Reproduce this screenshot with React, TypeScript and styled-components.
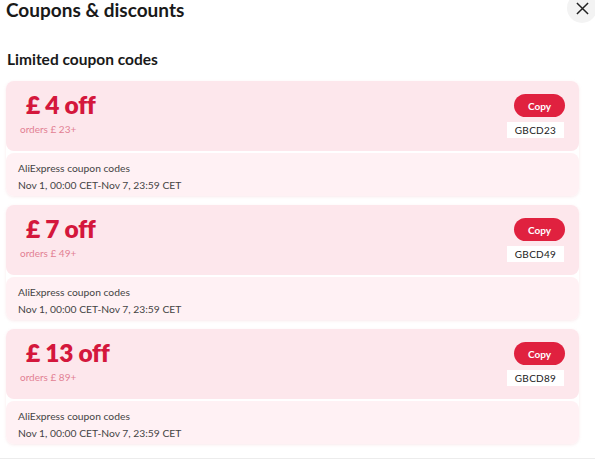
import React from "react";
import styled, { createGlobalStyle } from "styled-components";

const Global = createGlobalStyle`
  body {
    margin: 0;
    background: #fff;
    font-family: Lato, "Open Sans", sans-serif;
    color: #191919;
  }
`;

interface ICoupon {
  amount: number;
  minimum: number;
  code: string;
}

const coupons: ICoupon[] = [
  { amount: 4, minimum: 23, code: "GBCD23" },
  { amount: 7, minimum: 49, code: "GBCD49" },
  { amount: 13, minimum: 89, code: "GBCD89" },
];

const Sheet = styled.div`
  width: 595px;
  height: 459px;
  box-sizing: border-box;
  border-bottom: 1px solid #ececec;
  overflow: hidden;
  padding: 0 16px 0 6px;
`;

const Header = styled.div`
  display: flex;
  justify-content: space-between;
  align-items: flex-start;
  height: 30px;
`;

const Title = styled.h1`
  margin: 0;
  font-size: 19px;
  line-height: 19px;
  font-weight: 700;
  color: #191919;
`;

const Close = styled.button`
  width: 30px;
  height: 30px;
  border: none;
  border-radius: 50%;
  background: #f3f3f3;
  display: flex;
  align-items: center;
  justify-content: center;
  padding: 0;
  margin-right: -18px;
  margin-top: -7px;
`;

const Section = styled.h2`
  margin: 20px 0 13px 1px;
  font-size: 15.5px;
  line-height: 18px;
  font-weight: 700;
  color: #191919;
`;

const Card = styled.div`
  display: flex;
  flex-direction: column;
  gap: 2px;
  margin-bottom: 9px;
  border-radius: 8px;
  box-shadow: 0 1px 3px rgba(230, 170, 180, 0.25);
`;

const Top = styled.div`
  height: 70px;
  box-sizing: border-box;
  background: #fde7ec;
  border-radius: 8px;
  display: flex;
  justify-content: space-between;
  padding: 9px 14px 0 20px;
`;

const Amount = styled.div`
  font-size: 24.5px;
  line-height: 30px;
  font-weight: 800;
  color: #d4173c;
  letter-spacing: -0.3px;
`;

const Minimum = styled.div`
  font-size: 10px;
  line-height: 12px;
  color: #e27f93;
  margin-left: -6px;
  margin-top: 3px;
`;

const Actions = styled.div`
  display: flex;
  flex-direction: column;
  align-items: flex-end;
  padding-top: 4px;
`;

const CopyButton = styled.button`
  width: 51px;
  height: 23px;
  border: none;
  border-radius: 12px;
  background: #e0213f;
  color: #fff;
  font-family: Lato, sans-serif;
  font-size: 10px;
  font-weight: 700;
  padding: 0;
`;

const Code = styled.div`
  margin-top: 5px;
  margin-right: 1px;
  background: #fff;
  height: 16px;
  width: 57px;
  font-size: 10px;
  line-height: 16px;
  text-align: center;
  color: #191919;
  letter-spacing: 0.3px;
`;

const Bottom = styled.div`
  height: 43px;
  box-sizing: border-box;
  background: #fff1f4;
  border-radius: 8px;
  padding: 7px 12px 0 12px;
  font-size: 10.3px;
  line-height: 17px;
  color: #444;
`;

const CouponCard: React.FC<ICoupon> = ({ amount, minimum, code }) => (
  <Card>
    <Top>
      <div>
        <Amount>£ {amount} off</Amount>
        <Minimum>orders £ {minimum}+</Minimum>
      </div>
      <Actions>
        <CopyButton>Copy</CopyButton>
        <Code>{code}</Code>
      </Actions>
    </Top>
    <Bottom>
      <div>AliExpress coupon codes</div>
      <div>Nov 1, 00:00 CET-Nov 7, 23:59 CET</div>
    </Bottom>
  </Card>
);

const App: React.FC = () => (
  <>
    <Global />
    <Sheet>
      <Header>
        <Title>Coupons &amp; discounts</Title>
        <Close aria-label="Close">
          <svg width="13" height="13" viewBox="0 0 14 14">
            <path d="M1 1L13 13M13 1L1 13" stroke="#222" strokeWidth="1.6" />
          </svg>
        </Close>
      </Header>
      <Section>Limited coupon codes</Section>
      {coupons.map((c) => (
        <CouponCard key={c.code} {...c} />
      ))}
    </Sheet>
  </>
);

export default App;
